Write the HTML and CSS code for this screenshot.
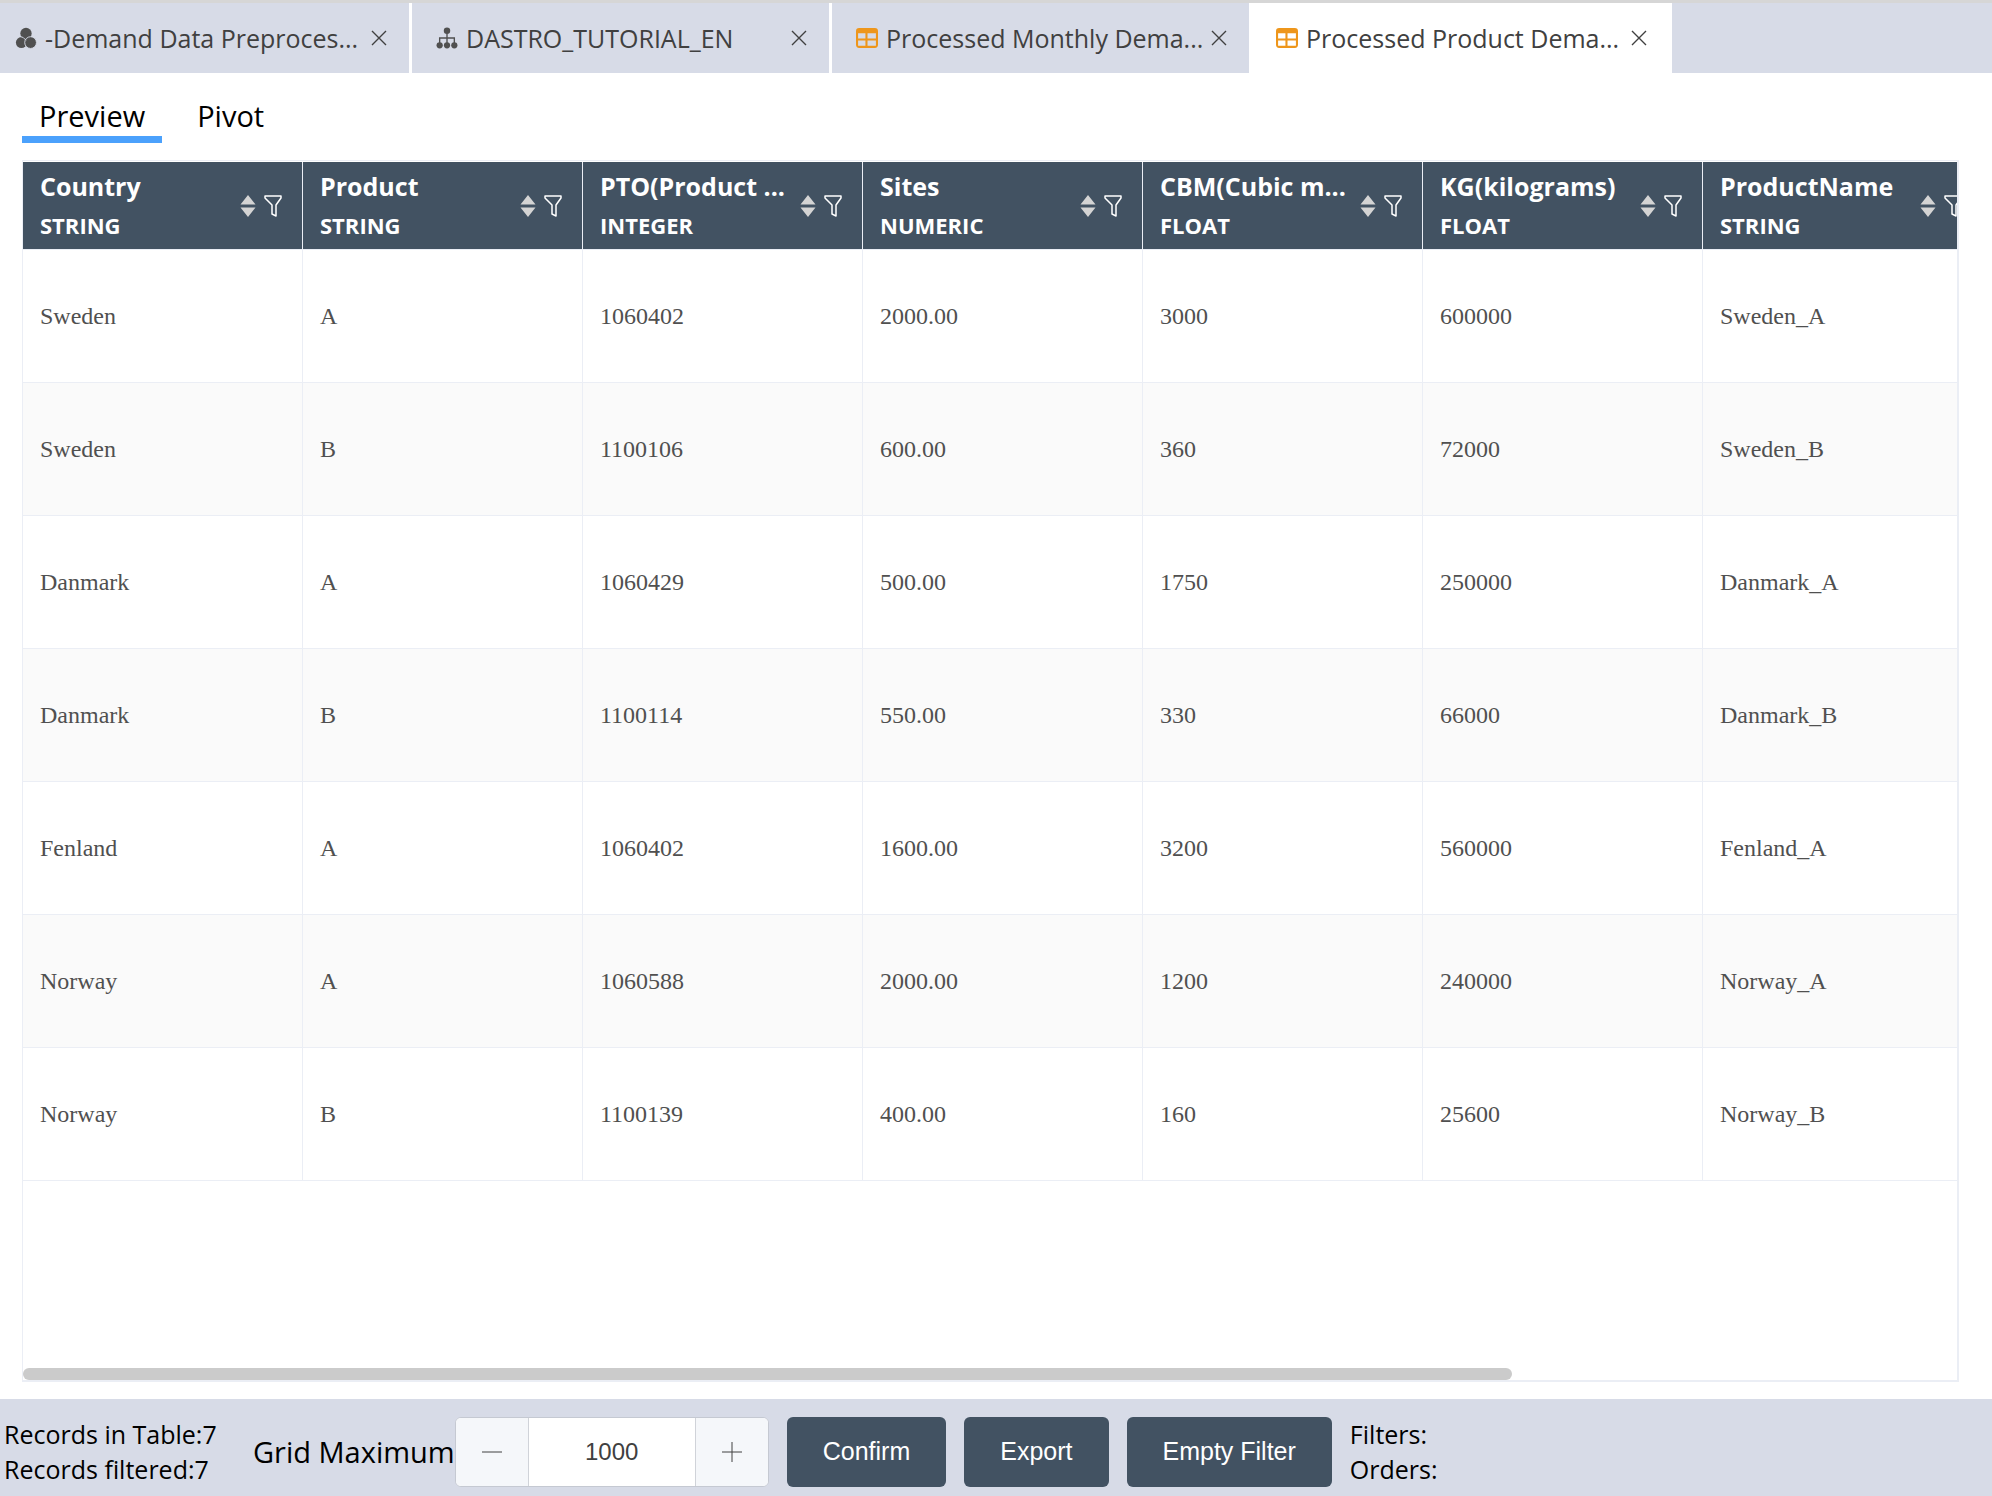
FILE: index.html
```
<!DOCTYPE html>
<html lang="en">
<head>
  <meta charset="UTF-8" />
  <meta name="viewport" content="width=device-width, initial-scale=1.0" />
  <title>Processed Product Demand</title>
  <link rel="stylesheet" href="styles.css">
</head>
<body>
  <svg class="sprite" aria-hidden="true">
    <symbol id="i-circles" viewBox="0 0 22 24"><circle cx="11" cy="7" r="6.200"/><circle cx="6" cy="17" r="6"/><circle cx="16" cy="17" r="6.400" stroke="#d7dbe7" stroke-width="1"/><path d="M5 10.500q3 0 6 4" fill="none" stroke="#d7dbe7" stroke-width="1"/></symbol>
    <symbol id="i-tree" viewBox="0 0 24 24"><circle cx="12" cy="4" r="3.500"/><path d="M12 7v12M4 19v-7h16v7" fill="none" stroke="currentColor" stroke-width="1.500"/><circle cx="4" cy="20" r="3.400"/><circle cx="12" cy="20" r="3.400"/><circle cx="20" cy="20" r="3.400"/></symbol>
    <symbol id="i-grid" viewBox="0 0 21 19"><path fill-rule="evenodd" d="M3 0h15a3 3 0 0 1 3 3v13a3 3 0 0 1-3 3H3a3 3 0 0 1-3-3V3a3 3 0 0 1 3-3zM2 5v5h7V5zM11 5v5h8V5zM2 12v5h7v-5zM11 12v5h8v-5z"/></symbol>
    <symbol id="i-close" viewBox="0 0 16 16"><path d="M1 1l14 14M15 1L1 15" fill="none" stroke="currentColor" stroke-width="1.400"/></symbol>
    <symbol id="i-sort" viewBox="0 0 16 22"><path d="M8 0l7.500 9.500H.5zM8 22l7.500-9.500H.5z"/></symbol>
    <symbol id="i-funnel" viewBox="0 0 18 22"><path d="M1 1h16v2l-5 7v11l-4-2v-9L1 3z" fill="none" stroke="currentColor" stroke-width="1.500" stroke-linejoin="round"/></symbol>
  </svg>

  <nav class="tabs">
    <div class="tab">
      <svg class="tab-icon"><use href="#i-circles"/></svg>
      <a class="tab-name" href="#">-Demand Data Preproces...</a>
      <button class="close" aria-label="Close"><svg><use href="#i-close"/></svg></button>
    </div>
    <div class="tab">
      <svg class="tab-icon"><use href="#i-tree"/></svg>
      <a class="tab-name" href="#">DASTRO_TUTORIAL_EN</a>
      <button class="close" aria-label="Close"><svg><use href="#i-close"/></svg></button>
    </div>
    <div class="tab">
      <svg class="tab-icon orange"><use href="#i-grid"/></svg>
      <a class="tab-name" href="#">Processed Monthly Dema...</a>
      <button class="close" aria-label="Close"><svg><use href="#i-close"/></svg></button>
    </div>
    <div class="tab active">
      <svg class="tab-icon orange"><use href="#i-grid"/></svg>
      <a class="tab-name" href="#">Processed Product Dema...</a>
      <button class="close" aria-label="Close"><svg><use href="#i-close"/></svg></button>
    </div>
  </nav>

  <main class="content">
    <div class="views">
      <button class="view active">Preview</button>
      <button class="view">Pivot</button>
    </div>

    <div class="grid-box">
      <table class="grid">
        <thead>
          <tr>
            <th><div class="head"><div class="names"><span class="col-name">Country</span><span class="col-type">STRING</span></div><button class="tool" aria-label="Sort"><svg class="sort"><use href="#i-sort"/></svg></button><button class="tool" aria-label="Filter"><svg class="funnel"><use href="#i-funnel"/></svg></button></div></th>
            <th><div class="head"><div class="names"><span class="col-name">Product</span><span class="col-type">STRING</span></div><button class="tool" aria-label="Sort"><svg class="sort"><use href="#i-sort"/></svg></button><button class="tool" aria-label="Filter"><svg class="funnel"><use href="#i-funnel"/></svg></button></div></th>
            <th><div class="head"><div class="names"><span class="col-name">PTO(Product ...</span><span class="col-type">INTEGER</span></div><button class="tool" aria-label="Sort"><svg class="sort"><use href="#i-sort"/></svg></button><button class="tool" aria-label="Filter"><svg class="funnel"><use href="#i-funnel"/></svg></button></div></th>
            <th><div class="head"><div class="names"><span class="col-name">Sites</span><span class="col-type">NUMERIC</span></div><button class="tool" aria-label="Sort"><svg class="sort"><use href="#i-sort"/></svg></button><button class="tool" aria-label="Filter"><svg class="funnel"><use href="#i-funnel"/></svg></button></div></th>
            <th><div class="head"><div class="names"><span class="col-name">CBM(Cubic m...</span><span class="col-type">FLOAT</span></div><button class="tool" aria-label="Sort"><svg class="sort"><use href="#i-sort"/></svg></button><button class="tool" aria-label="Filter"><svg class="funnel"><use href="#i-funnel"/></svg></button></div></th>
            <th><div class="head"><div class="names"><span class="col-name">KG(kilograms)</span><span class="col-type">FLOAT</span></div><button class="tool" aria-label="Sort"><svg class="sort"><use href="#i-sort"/></svg></button><button class="tool" aria-label="Filter"><svg class="funnel"><use href="#i-funnel"/></svg></button></div></th>
            <th><div class="head"><div class="names"><span class="col-name">ProductName</span><span class="col-type">STRING</span></div><button class="tool" aria-label="Sort"><svg class="sort"><use href="#i-sort"/></svg></button><button class="tool" aria-label="Filter"><svg class="funnel"><use href="#i-funnel"/></svg></button></div></th>
          </tr>
        </thead>
        <tbody>
          <tr><td>Sweden</td><td>A</td><td>1060402</td><td>2000.00</td><td>3000</td><td>600000</td><td>Sweden_A</td></tr>
          <tr><td>Sweden</td><td>B</td><td>1100106</td><td>600.00</td><td>360</td><td>72000</td><td>Sweden_B</td></tr>
          <tr><td>Danmark</td><td>A</td><td>1060429</td><td>500.00</td><td>1750</td><td>250000</td><td>Danmark_A</td></tr>
          <tr><td>Danmark</td><td>B</td><td>1100114</td><td>550.00</td><td>330</td><td>66000</td><td>Danmark_B</td></tr>
          <tr><td>Fenland</td><td>A</td><td>1060402</td><td>1600.00</td><td>3200</td><td>560000</td><td>Fenland_A</td></tr>
          <tr><td>Norway</td><td>A</td><td>1060588</td><td>2000.00</td><td>1200</td><td>240000</td><td>Norway_A</td></tr>
          <tr><td>Norway</td><td>B</td><td>1100139</td><td>400.00</td><td>160</td><td>25600</td><td>Norway_B</td></tr>
        </tbody>
      </table>
      <div class="scrollbar"><div class="thumb"></div></div>
    </div>
  </main>

  <footer class="bar">
    <div class="info records">
      <div>Records in Table:7</div>
      <div>Records filtered:7</div>
    </div>
    <label class="max-label" for="gridMax">Grid Maximum</label>
    <div class="stepper">
      <button class="step" aria-label="Decrease"><svg viewBox="0 0 20 20"><path d="M0 10h20"/></svg></button>
      <input id="gridMax" type="text" value="1000" />
      <button class="step" aria-label="Increase"><svg viewBox="0 0 20 20"><path d="M0 10h20M10 0v20"/></svg></button>
    </div>
    <button class="btn">Confirm</button>
    <button class="btn">Export</button>
    <button class="btn">Empty Filter</button>
    <div class="info">
      <div>Filters:</div>
      <div>Orders:</div>
    </div>
  </footer>
</body>
</html>
```
FILE: styles.css
```
* {
  box-sizing: border-box;
}
body {
  margin: 0;
  min-height: 100vh;
  display: flex;
  flex-direction: column;
  background: #fff;
  color: #000;
  font-family: "Open Sans", "Noto Sans", sans-serif;
}
button {
  font: inherit;
  color: inherit;
  background: none;
  border: none;
  padding: 0;
  cursor: pointer;
}
svg {
  display: block;
  fill: currentColor;
}
.sprite {
  display: none;
}

/* open documents */
.tabs {
  display: flex;
  height: 73px;
  border-top: 3px solid #d6d6d6;
  background: #d7dbe7;
}
.tab {
  display: flex;
  align-items: center;
  width: 420px;
  padding: 0 22px 0 24px;
  border-right: 3px solid #fff;
  color: #404040;
}
.tab:first-child {
  width: 412px;
  padding-left: 15px;
}
.tab.active {
  background: #fff;
}
.tab-icon {
  flex: none;
  width: 22px;
  height: 22px;
  color: #505050;
}
.tab-icon.orange {
  color: #ee961b;
}
.tab-name {
  flex: 1;
  margin-left: 8px;
  font-size: 25px;
  white-space: nowrap;
  color: inherit;
  text-decoration: none;
}
.close svg {
  width: 16px;
  height: 16px;
}

/* preview / pivot switch */
.content {
  flex: 1;
  display: flex;
  flex-direction: column;
  padding: 15px 33px 17px 22px;
}
.views {
  display: flex;
  gap: 18px;
  height: 55px;
  margin-bottom: 17px;
}
.view {
  padding: 6px 17px 0;
  border-bottom: 7px solid transparent;
  font-size: 29px;
}
.view.active {
  border-color: #4ba1fc;
}

/* data grid */
.grid-box {
  flex: 1;
  display: flex;
  flex-direction: column;
  overflow: hidden;
  border: 1px solid #ebeef5;
  border-right-width: 2px;
  border-bottom-width: 2px;
  padding-top: 1px;
}
.grid {
  width: 1960px;
  table-layout: fixed;
  border-collapse: separate;
  border-spacing: 0;
}
.grid th, .grid td {
  padding: 0 20px 0 17px;
  border-right: 1px solid #ebeef5;
  border-bottom: 1px solid #ebeef5;
  text-align: left;
}
.grid th {
  height: 88px;
  background: #425262;
  color: #fff;
}
.head {
  display: flex;
  align-items: center;
}
.names {
  flex: 1;
  min-width: 0;
}
.col-name, .col-type {
  display: block;
  line-height: 39px;
  font-size: 25px;
  white-space: nowrap;
}
.col-type {
  font-size: 22px;
}
.tool {
  margin-left: 8px;
}
.sort {
  width: 16px;
  height: 22px;
  color: #d4d4d4;
}
.funnel {
  width: 18px;
  height: 22px;
}
.grid td {
  height: 133px;
  font-family: "Liberation Serif", serif;
  font-size: 24px;
  color: #505050;
}
.grid tr:nth-child(even) td {
  background: #fafafa;
}
.scrollbar {
  height: 12px;
  margin-top: auto;
}
.thumb {
  width: 77%;
  height: 12px;
  border-radius: 6px;
  background: #cbcbcb;
}

/* bottom toolbar */
.bar {
  display: flex;
  align-items: center;
  height: 97px;
  padding: 8px 4px 0;
  background: #d7dbe7;
}
.info {
  font-size: 25px;
  line-height: 35px;
  white-space: nowrap;
}
.records {
  width: 249px;
}
.max-label {
  font-size: 29px;
  white-space: nowrap;
}
.stepper {
  display: flex;
  width: 314px;
  height: 70px;
  overflow: hidden;
  border: 1px solid #c5c9d2;
  border-radius: 6px;
  background: #fff;
}
.step {
  display: flex;
  align-items: center;
  justify-content: center;
  width: 72px;
  background: #f5f7fa;
}
.step svg {
  width: 20px;
  height: 20px;
  stroke: #404040;
  stroke-width: 1;
}
.stepper input {
  flex: 1;
  min-width: 0;
  border: solid #d0d3d9;
  border-width: 0 1px;
  text-align: center;
  font-family: "Liberation Sans", sans-serif;
  font-size: 24px;
  color: #404040;
}
.btn {
  height: 70px;
  margin-left: 18px;
  padding: 0 36px;
  border-radius: 6px;
  background: #425262;
  color: #fff;
  font-family: "Liberation Sans", sans-serif;
  font-size: 25px;
}
.btn + .info {
  margin-left: 18px;
}
```
